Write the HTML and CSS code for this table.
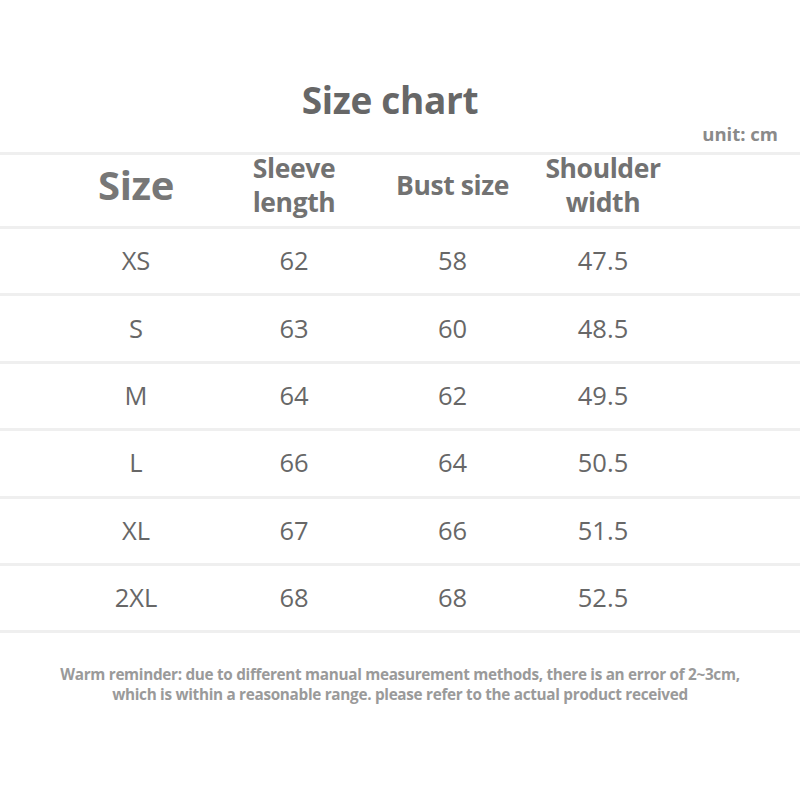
FILE: index.html
```html
<!DOCTYPE html>
<html>
<head>
<meta charset="utf-8">
<link rel="stylesheet" href="styles.css">
</head>
<body>
<div class="page">
  <h1 class="title">Size chart</h1>
  <div class="unit">unit: cm</div>
  <div class="table">
    <div class="row head">
      <div class="cell big">Size</div>
      <div class="cell">Sleeve<br>length</div>
      <div class="cell">Bust size</div>
      <div class="cell">Shoulder<br>width</div>
    </div>
    <div class="row"><div class="cell">XS</div><div class="cell">62</div><div class="cell">58</div><div class="cell">47.5</div></div>
    <div class="row"><div class="cell">S</div><div class="cell">63</div><div class="cell">60</div><div class="cell">48.5</div></div>
    <div class="row"><div class="cell">M</div><div class="cell">64</div><div class="cell">62</div><div class="cell">49.5</div></div>
    <div class="row"><div class="cell">L</div><div class="cell">66</div><div class="cell">64</div><div class="cell">50.5</div></div>
    <div class="row"><div class="cell">XL</div><div class="cell">67</div><div class="cell">66</div><div class="cell">51.5</div></div>
    <div class="row last"><div class="cell">2XL</div><div class="cell">68</div><div class="cell">68</div><div class="cell">52.5</div></div>
  </div>
  <p class="note">Warm reminder: due to different manual measurement methods, there is an error of 2~3cm,<br>which is within a reasonable range. please refer to the actual product received</p>
</div>
</body>
</html>
```

FILE: styles.css
```css
html, body {
  margin: 0;
  padding: 0;
  background: #ffffff;
}
.page {
  width: 800px;
  height: 800px;
  font-family: "Open Sans", "Noto Sans", sans-serif;
  color: #666;
  padding-top: 75px;
  box-sizing: border-box;
}
.title {
  margin: 0;
  text-align: center;
  font-size: 37px;
  line-height: 50px;
  font-weight: 700;
  color: #676767;
  letter-spacing: -0.3px;
  padding-right: 20px;
}
.unit {
  text-align: right;
  padding-right: 22px;
  font-size: 18.5px;
  line-height: 22px;
  font-weight: 700;
  color: #8a8a8a;
  margin-top: -2px;
}
.table {
  margin-top: 7px;
  border-top: 3px solid #efefef;
}
.row {
  display: grid;
  grid-template-columns: 158px 158px 159px 142px;
  padding-left: 57px;
  height: 67.4px;
  box-sizing: border-box;
  padding-bottom: 2px;
  align-items: center;
  border-bottom: 3px solid #efefef;
}
.row.head {
  height: 74px;
  padding-bottom: 0;
  grid-template-rows: 60px;
  align-content: start;
}
.cell {
  text-align: center;
  font-size: 25.5px;
  color: #676767;
}
.head .cell {
  font-size: 26.5px;
  line-height: 34px;
  font-weight: 700;
  color: #727272;
  letter-spacing: -0.4px;
}
.head .cell.big {
  font-size: 40px;
  color: #777;
}
.note {
  margin: 31px 0 0;
  text-align: center;
  font-size: 15.3px;
  line-height: 20px;
  font-weight: 700;
  color: #9a9a9a;
  letter-spacing: -0.3px;
}
```
